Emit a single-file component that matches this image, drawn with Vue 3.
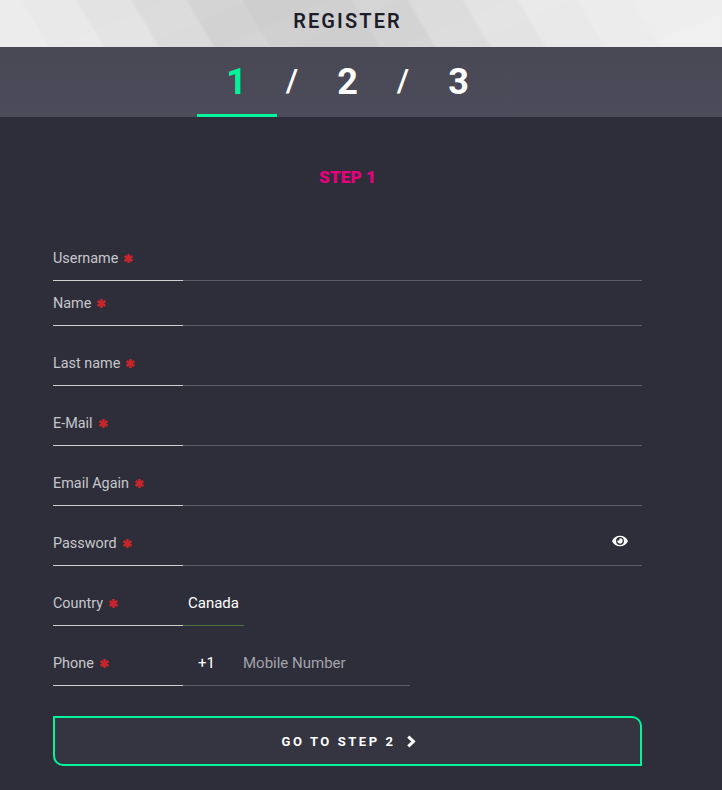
<script setup>
const rows = [
  { id: 'username', label: 'Username', first: true },
  { id: 'name', label: 'Name', tight: true },
  { id: 'lastname', label: 'Last name' },
  { id: 'email', label: 'E-Mail' },
  { id: 'email2', label: 'Email Again' },
  { id: 'password', label: 'Password', eye: true },
]
const bands = [
  ['#e9e9e9', 18], ['#e3e3e3', 73], ['#dbdbdb', 128], ['#d2d2d2', 183],
  ['#cecece', 238], ['#d3d3d3', 350], ['#dcdcdc', 405], ['#e3e3e3', 460],
  ['#e9e9e9', 515], ['#ececec', 574], ['#eeeeee', 629],
]
const bandPoints = (x, i) => {
  const next = i < bands.length - 1 ? bands[i + 1][1] : 800
  return `${x},-5 ${next},-5 ${next + 34},52 ${x + 34},52`
}
</script>

<template>
  <div class="page">
    <header class="title">
      <svg class="title-bg" viewBox="0 0 722 47" width="722" height="47" aria-hidden="true">
        <defs>
          <filter id="soft" x="-5%" y="-20%" width="110%" height="140%">
            <feGaussianBlur stdDeviation="0.9" />
          </filter>
        </defs>
        <rect width="722" height="47" fill="#ececec" />
        <g filter="url(#soft)">
          <polygon v-for="(b, i) in bands" :key="b[1]" :points="bandPoints(b[1], i)" :fill="b[0]" />
          <polygon points="58,47 168,0 250,0 140,47" fill="#ffffff" opacity="0.05" />
          <polygon points="220,47 330,0 400,0 290,47" fill="#ffffff" opacity="0.06" />
          <polygon points="400,47 510,0 570,0 460,47" fill="#ffffff" opacity="0.05" />
          <polygon points="640,47 722,12 722,47" fill="#ffffff" opacity="0.12" />
        </g>
      </svg>
      <h1>REGISTER</h1>
    </header>

    <nav class="steps">
      <div class="steps-inner">
        <span class="step active">1</span>
        <span class="slash">/</span>
        <span class="step">2</span>
        <span class="slash">/</span>
        <span class="step">3</span>
      </div>
    </nav>

    <main class="content">
      <h2>STEP 1</h2>
      <form class="form" @submit.prevent>
        <div v-for="r in rows" :key="r.id" class="row" :class="{ first: r.first, tight: r.tight }">
          <label :for="r.id">{{ r.label }}
            <svg class="star" viewBox="0 0 12 12" aria-hidden="true"><path d="M6 1v10M1.7 3.5l8.6 5M10.3 3.5l-8.6 5" /></svg>
          </label>
          <div class="field">
            <input :id="r.id" type="text" />
            <svg v-if="r.eye" class="eye" viewBox="0 0 576 512" aria-hidden="true"><path d="M572.52 241.4C518.29 135.59 410.93 64 288 64S57.68 135.64 3.48 241.41a32.35 32.35 0 0 0 0 29.19C57.71 376.41 165.07 448 288 448s230.32-71.64 284.52-177.41a32.35 32.35 0 0 0 0-29.19zM288 400a144 144 0 1 1 144-144 143.93 143.93 0 0 1-144 144zm0-240a95.31 95.31 0 0 0-25.31 3.79 47.85 47.85 0 0 1-66.9 66.9A95.78 95.78 0 1 0 288 160z" /></svg>
          </div>
        </div>

        <div class="row">
          <label for="country">Country
            <svg class="star" viewBox="0 0 12 12" aria-hidden="true"><path d="M6 1v10M1.7 3.5l8.6 5M10.3 3.5l-8.6 5" /></svg>
          </label>
          <div class="field country"><span id="country" class="value">Canada</span></div>
        </div>

        <div class="row">
          <label for="phone">Phone
            <svg class="star" viewBox="0 0 12 12" aria-hidden="true"><path d="M6 1v10M1.7 3.5l8.6 5M10.3 3.5l-8.6 5" /></svg>
          </label>
          <div class="field phone">
            <span class="code">+1</span>
            <input id="phone" type="text" placeholder="Mobile Number" />
          </div>
        </div>

        <button class="next" type="submit">
          <span>GO TO STEP 2</span>
          <svg class="chev" viewBox="0 0 10 12" aria-hidden="true"><path d="M2 1.5 6.8 6 2 10.5" /></svg>
        </button>
      </form>
    </main>
  </div>
</template>

<style>
html, body { margin: 0; background: #2e2e3a; }
</style>

<style scoped>
.page {
  width: 722px;
  height: 790px;
  overflow: hidden;
  background: #2e2e3a;
  font-family: Roboto, "Liberation Sans", sans-serif;
}
.title {
  position: relative;
  height: 47px;
  width: 695px;
  display: flex;
  align-items: center;
  justify-content: center;
}
.title-bg { position: absolute; left: 0; top: 0; }
.title h1 {
  position: relative;
  margin: 0;
  font-size: 20px;
  line-height: 42px;
  padding-bottom: 5px;
  font-weight: 600;
  letter-spacing: 2.1px;
  color: #1e1d2a;
}
.steps {
  height: 70px;
  background: linear-gradient(180deg, #484754 0%, #4d4c5a 100%);
}
.steps-inner {
  width: 695px;
  height: 70px;
  display: flex;
  justify-content: center;
}
.step {
  width: 80px;
  height: 70px;
  box-sizing: border-box;
  text-align: center;
  font-size: 36px;
  line-height: 70px;
  font-weight: 700;
  color: #ffffff;
}
.step.active {
  color: #00f59b;
  border-bottom: 3px solid #00f59b;
}
.slash {
  width: 31px;
  text-align: center;
  font-size: 32px;
  line-height: 67px;
  font-weight: 500;
  color: #ffffff;
}
.content { width: 695px; }
h2 {
  margin: 0;
  padding-top: 49px;
  height: 22px;
  line-height: 22px;
  text-align: center;
  font-size: 17.3px;
  font-weight: 900;
  color: #e6007e;
}
.form {
  width: 589px;
  margin: 48px 0 0 53px;
  display: flex;
  flex-direction: column;
}
.row {
  display: flex;
  height: 45px;
  margin-top: 15px;
}
.row.first { margin-top: 0; }
.row.tight { margin-top: 0; }
label {
  width: 130px;
  flex: none;
  box-sizing: border-box;
  border-bottom: 1px solid #d0d0d0;
  display: flex;
  align-items: center;
  gap: 5px;
  padding-top: 2px;
  font-size: 14.4px;
  line-height: 16px;
  color: #c6c7cc;
}
.star {
  width: 11px;
  height: 11px;
  margin-top: -2px;
  fill: none;
  stroke: #c7242b;
  stroke-width: 2.8;
}
.field {
  flex: 1;
  box-sizing: border-box;
  border-bottom: 1px solid #5d5c68;
  display: flex;
  align-items: center;
  position: relative;
}
.field input {
  flex: 1;
  min-width: 0;
  border: 0;
  outline: 0;
  background: transparent;
  font: inherit;
  font-size: 15px;
  color: #fff;
  padding: 0;
}
.field input::placeholder { color: #a3a3a9; opacity: 1; }
.eye {
  position: absolute;
  right: 14px;
  top: 13px;
  width: 16px;
  height: 14px;
  fill: #ffffff;
}
.country {
  flex: none;
  width: 61px;
  border-bottom-color: #4f7242;
}
.value {
  margin-left: 5px;
  font-size: 15px;
  color: #ffffff;
}
.phone {
  flex: none;
  width: 227px;
}
.code {
  width: 60px;
  flex: none;
  box-sizing: border-box;
  padding-left: 15px;
  font-size: 15px;
  color: #ffffff;
}
.next {
  margin-top: 30px;
  height: 50px;
  box-sizing: border-box;
  border: 2px solid #00f59b;
  border-radius: 0 10px 0 10px;
  background: #353541;
  color: #ffffff;
  font-family: inherit;
  font-size: 13px;
  font-weight: 700;
  letter-spacing: 2.55px;
  display: flex;
  align-items: center;
  justify-content: center;
  gap: 11px;
  padding: 0 0 0 4px;
}
.chev {
  width: 11px;
  height: 13px;
  fill: none;
  stroke: #ffffff;
  stroke-width: 2.8;
}
</style>
